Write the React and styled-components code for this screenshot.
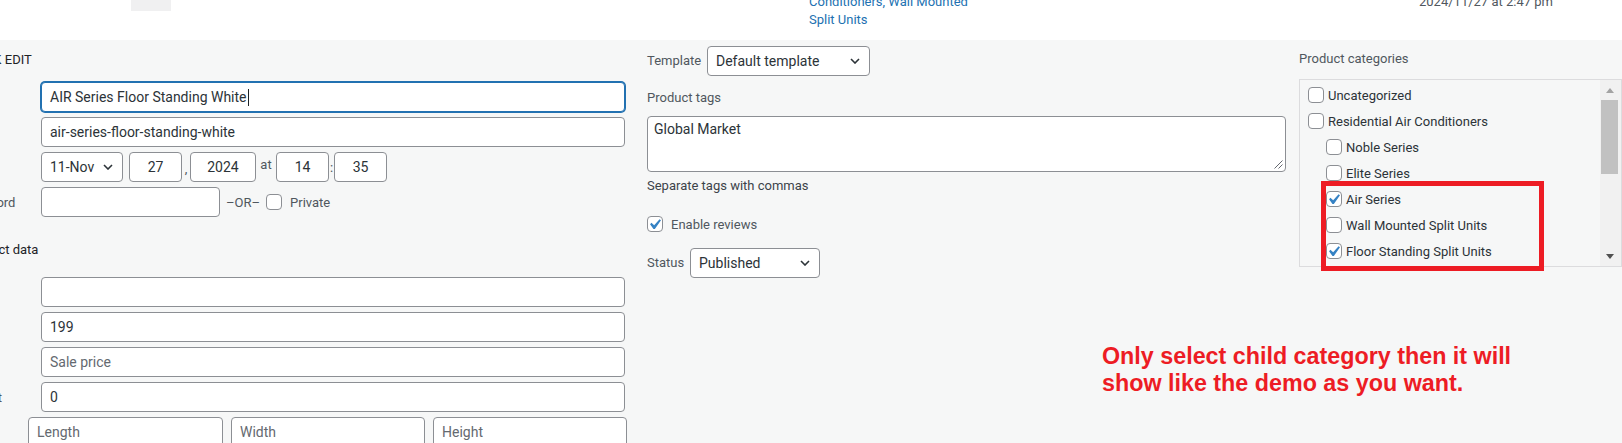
import React from "react";
import styled, { createGlobalStyle } from "styled-components";

const UI = 'Roboto, "Noto Sans", "DejaVu Sans", sans-serif';

const GlobalStyle = createGlobalStyle`
  html, body { margin: 0; padding: 0; background: #fff; overflow: hidden; }
  body { font-family: ${UI}; font-size: 13px; color: #3c434a; }
  * { box-sizing: border-box; }
`;

const Page = styled.div`
  width: 1622px;
  height: 443px;
  overflow: hidden;
  display: flex;
  flex-direction: column;
`;

/* row of the list table above the quick edit panel */
const ListRow = styled.div`
  height: 40px;
  flex-shrink: 0;
  background: #fff;
  display: flex;
  align-items: flex-start;
  padding-left: 131px;
  overflow: hidden;
`;

const Thumb = styled.div`
  width: 40px;
  height: 11px;
  background: #f0f0f1;
`;

const CatLinks = styled.div`
  margin-left: 638px;
  margin-top: -7px;
  width: 200px;
  line-height: 18px;
  color: #2271b1;
`;

const Modified = styled.div`
  margin-left: 410px;
  margin-top: -7px;
  line-height: 18px;
  color: #50575e;
`;

const Panel = styled.div`
  flex: 1;
  background: #f6f7f7;
  display: flex;
  align-items: flex-start;
`;

const LeftCol = styled.div`
  margin-left: -80px;
  width: 705px;
  flex-shrink: 0;
  display: flex;
  flex-direction: column;
`;

const Legend = styled.div`
  margin-top: 4px;
  height: 32px;
  line-height: 32px;
  padding-left: 44px;
  color: #1d2327;
  text-transform: uppercase;
`;

const SectionTitle = styled.div`
  margin-top: 23px;
  height: 20px;
  line-height: 20px;
  padding-left: 44px;
  color: #1d2327;
`;

const FieldRow = styled.div`
  display: flex;
  align-items: center;
  height: 30px;
  margin-top: ${(p) => (p.$mt !== undefined ? p.$mt : 5)}px;
  gap: ${(p) => p.$gap || 0}px;
`;

const RowLabel = styled.span`
  width: ${(p) => p.$w || 121}px;
  padding-left: ${(p) => p.$pad || 38}px;
  flex-shrink: 0;
  color: #50575e;
  white-space: nowrap;
  overflow: hidden;
`;

const Field = styled.div`
  flex: ${(p) => (p.$w ? "0 0 auto" : "1")};
  width: ${(p) => (p.$w ? `${p.$w}px` : "auto")};
  height: 30px;
  background: #fff;
  border: 1px solid ${(p) => (p.$focus ? "#2271b1" : "#8c8f94")};
  box-shadow: ${(p) => (p.$focus ? "0 0 0 1px #2271b1" : "none")};
  border-radius: 4px;
  display: flex;
  align-items: center;
  justify-content: ${(p) => (p.$center ? "center" : "flex-start")};
  padding: 0 8px;
  font-size: 14px;
  color: ${(p) => (p.$ph ? "#646970" : "#2c3338")};
  white-space: nowrap;
  overflow: hidden;
`;

const Caret = styled.span`
  display: inline-block;
  width: 1px;
  height: 17px;
  margin-left: 1px;
  background: #1d2327;
`;

const Sep = styled.span`
  width: ${(p) => p.$w}px;
  flex-shrink: 0;
  text-align: center;
  color: #50575e;
  align-self: ${(p) => (p.$low ? "flex-end" : "center")};
  padding-bottom: ${(p) => (p.$low ? 6 : 0)}px;
  margin-top: ${(p) => (p.$raise ? -6 : 0)}px;
`;

const Note = styled.span`
  margin: 0 6px;
  color: #50575e;
  white-space: nowrap;
`;

const SelectBox = styled.div`
  width: ${(p) => p.$w}px;
  height: 30px;
  flex-shrink: 0;
  background: #fff;
  border: 1px solid #8c8f94;
  border-radius: 4px;
  display: flex;
  align-items: center;
  justify-content: space-between;
  padding: 0 9px 0 8px;
  font-size: 14px;
  color: #2c3338;
  white-space: nowrap;
`;

const MidCol = styled.div`
  margin-left: 22px;
  width: 639px;
  flex-shrink: 0;
  display: flex;
  flex-direction: column;
`;

const InlineRow = styled.div`
  display: flex;
  align-items: center;
  margin-top: ${(p) => p.$mt}px;
`;

const Label = styled.span`
  display: block;
  width: ${(p) => (p.$w ? `${p.$w}px` : "auto")};
  flex-shrink: 0;
  line-height: 20px;
  color: #50575e;
  margin-top: ${(p) => p.$mt || 0}px;
`;

const TagsArea = styled.div`
  position: relative;
  margin-top: 8px;
  height: 56px;
  background: #fff;
  border: 1px solid #8c8f94;
  border-radius: 4px;
  padding: 2px 6px;
  line-height: 20px;
  font-size: 14px;
  color: #2c3338;
`;

const Grip = styled.svg`
  position: absolute;
  right: 2px;
  bottom: 2px;
`;

const Help = styled.div`
  margin-top: 4px;
  line-height: 20px;
  color: #3c434a;
`;

const CheckText = styled.span`
  margin-left: ${(p) => p.$gap || 8}px;
  color: ${(p) => p.$color || "#50575e"};
  white-space: nowrap;
`;

const RedNote = styled.div`
  margin-top: 65px;
  margin-left: 455px;
  font-family: "Liberation Sans", Arial, sans-serif;
  font-weight: 700;
  font-size: 23.3px;
  line-height: 26.6px;
  color: #ed1c24;
  white-space: nowrap;
`;

const RightCol = styled.div`
  margin-left: 13px;
  width: 323px;
  flex-shrink: 0;
  display: flex;
  flex-direction: column;
`;

const CatBox = styled.div`
  position: relative;
  margin-top: 10px;
  height: 188px;
  border: 1px solid #dcdcde;
  display: flex;
`;

const CatList = styled.ul`
  flex: 1;
  list-style: none;
  margin: 0;
  padding: 2px 0 0 8px;
  overflow: hidden;
`;

const CatItem = styled.li`
  height: 26px;
  display: flex;
  align-items: center;
  padding-left: ${(p) => (p.$child ? 18 : 0)}px;
`;

const Track = styled.div`
  width: 21px;
  flex-shrink: 0;
  background: #f1f1f1;
  display: flex;
  flex-direction: column;
`;

const ArrowBtn = styled.div`
  height: 20px;
  display: flex;
  align-items: center;
  justify-content: center;
  padding-right: 2px;
`;

const ThumbBar = styled.div`
  height: 74px;
  margin: 0 3px 0 1px;
  background: #c1c1c1;
`;

const TrackSpace = styled.div`
  flex: 1;
`;

const Highlight = styled.div`
  position: absolute;
  left: 21px;
  top: 101px;
  width: 223px;
  height: 90px;
  border: 5px solid #ed1c24;
  pointer-events: none;
`;

const BoxEl = styled.span`
  position: relative;
  display: inline-block;
  width: 16px;
  height: 16px;
  flex-shrink: 0;
  background: #fff;
  border: 1px solid #8c8f94;
  border-radius: 4px;
`;

const Tick = styled.svg`
  position: absolute;
  left: -1px;
  top: -1px;
  overflow: visible;
`;

const Checkbox = ({ checked }) => (
  <BoxEl>
    {checked && (
      <Tick width="16" height="16" viewBox="2.86 1.9 15.24 15.24">
        <path
          d="M14.83 4.89l1.34.94-5.81 8.38H9.02L5.78 9.67l1.34-1.25 2.57 2.4z"
          fill="#3582c4"
        />
      </Tick>
    )}
  </BoxEl>
);

const Chevron = () => (
  <svg width="10" height="6" viewBox="0 0 10 6">
    <path d="M1 1l4 4 4-4" fill="none" stroke="#2c3338" strokeWidth="1.6" />
  </svg>
);

const Select = ({ w, children }) => (
  <SelectBox $w={w}>
    <span>{children}</span>
    <Chevron />
  </SelectBox>
);

const categories = [
  { name: "Uncategorized" },
  { name: "Residential Air Conditioners" },
  { name: "Noble Series", child: true },
  { name: "Elite Series", child: true },
  { name: "Air Series", child: true, checked: true },
  { name: "Wall Mounted Split Units", child: true },
  { name: "Floor Standing Split Units", child: true, checked: true },
];

export default function App() {
  return (
    <Page>
      <GlobalStyle />
      <ListRow>
        <Thumb />
        <CatLinks>
          <div>Conditioners, Wall Mounted</div>
          <div>Split Units</div>
        </CatLinks>
        <Modified>2024/11/27 at 2:47 pm</Modified>
      </ListRow>

      <Panel>
        <LeftCol>
          <Legend>Quick Edit</Legend>
          <FieldRow $mt={6}>
            <RowLabel>Title</RowLabel>
            <Field $focus>
              AIR Series Floor Standing White
              <Caret />
            </Field>
          </FieldRow>
          <FieldRow>
            <RowLabel>Slug</RowLabel>
            <Field>air-series-floor-standing-white</Field>
          </FieldRow>
          <FieldRow>
            <RowLabel>Date</RowLabel>
            <Select w={82}>11-Nov</Select>
            <Sep $w={6} />
            <Field $w={53} $center>27</Field>
            <Sep $w={8} $low>,</Sep>
            <Field $w={66} $center>2024</Field>
            <Sep $w={20} $raise>at</Sep>
            <Field $w={53} $center>14</Field>
            <Sep $w={5}>:</Sep>
            <Field $w={53} $center>35</Field>
          </FieldRow>
          <FieldRow>
            <RowLabel>Password</RowLabel>
            <Field $w={179} />
            <Note>–OR–</Note>
            <Checkbox />
            <CheckText>Private</CheckText>
          </FieldRow>

          <SectionTitle>Product data</SectionTitle>
          <FieldRow $mt={17}>
            <RowLabel>SKU</RowLabel>
            <Field />
          </FieldRow>
          <FieldRow>
            <RowLabel>Price</RowLabel>
            <Field>199</Field>
          </FieldRow>
          <FieldRow>
            <RowLabel>Sale</RowLabel>
            <Field $ph>Sale price</Field>
          </FieldRow>
          <FieldRow>
            <RowLabel $pad={42}>Weight</RowLabel>
            <Field>0</Field>
          </FieldRow>
          <FieldRow $gap={8}>
            <RowLabel $w={100}>L/W/H</RowLabel>
            <Field $w={195} $ph>Length</Field>
            <Field $w={194} $ph>Width</Field>
            <Field $w={194} $ph>Height</Field>
          </FieldRow>
        </LeftCol>

        <MidCol>
          <InlineRow $mt={6}>
            <Label $w={60}>Template</Label>
            <Select w={163}>Default template</Select>
          </InlineRow>
          <Label $mt={12}>Product tags</Label>
          <TagsArea>
            Global Market
            <Grip width="10" height="10" viewBox="0 0 10 10">
              <path d="M9.5 1.5l-8 8M9.5 5.5l-4 4" stroke="#646970" strokeWidth="1" />
            </Grip>
          </TagsArea>
          <Help>Separate tags with commas</Help>
          <InlineRow $mt={20}>
            <Checkbox checked />
            <CheckText>Enable reviews</CheckText>
          </InlineRow>
          <InlineRow $mt={16}>
            <Label $w={43}>Status</Label>
            <Select w={130}>Published</Select>
          </InlineRow>
          <RedNote>
            Only select child category then it will
            <br />
            show like the demo as you want.
          </RedNote>
        </MidCol>

        <RightCol>
          <Label $mt={9}>Product categories</Label>
          <CatBox>
            <CatList>
              {categories.map((c) => (
                <CatItem key={c.name} $child={c.child}>
                  <Checkbox checked={c.checked} />
                  <CheckText $gap={4} $color="#2c3338">
                    {c.name}
                  </CheckText>
                </CatItem>
              ))}
            </CatList>
            <Track>
              <ArrowBtn>
                <svg width="8" height="5" viewBox="0 0 8 5">
                  <polygon points="0,5 4,0 8,5" fill="#a3a3a3" />
                </svg>
              </ArrowBtn>
              <ThumbBar />
              <TrackSpace />
              <ArrowBtn>
                <svg width="8" height="5" viewBox="0 0 8 5">
                  <polygon points="0,0 8,0 4,5" fill="#505050" />
                </svg>
              </ArrowBtn>
            </Track>
            <Highlight />
          </CatBox>
        </RightCol>
      </Panel>
    </Page>
  );
}
